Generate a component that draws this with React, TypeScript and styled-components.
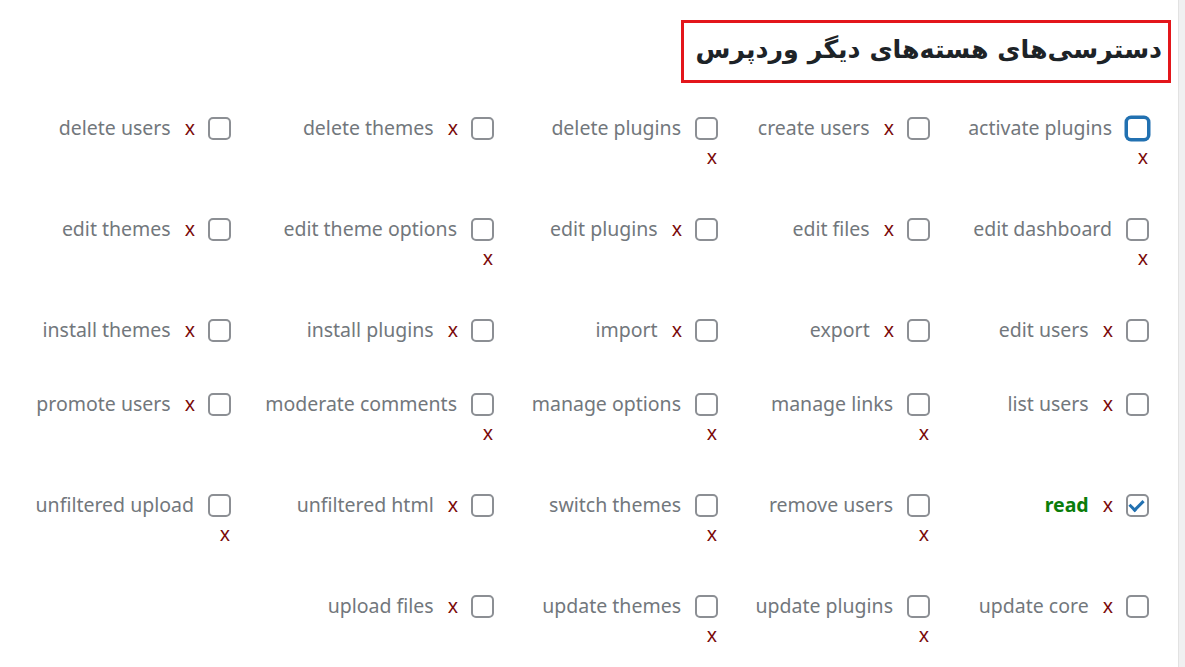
import React from 'react';
import styled, { createGlobalStyle } from 'styled-components';

interface Cap {
  name: string;
  wrap?: boolean;
  checked?: boolean;
  focused?: boolean;
  granted?: boolean;
}

const rows: Cap[][] = [
  [
    { name: 'activate plugins', wrap: true, focused: true },
    { name: 'create users' },
    { name: 'delete plugins', wrap: true },
    { name: 'delete themes' },
    { name: 'delete users' },
  ],
  [
    { name: 'edit dashboard', wrap: true },
    { name: 'edit files' },
    { name: 'edit plugins' },
    { name: 'edit theme options', wrap: true },
    { name: 'edit themes' },
  ],
  [
    { name: 'edit users' },
    { name: 'export' },
    { name: 'import' },
    { name: 'install plugins' },
    { name: 'install themes' },
  ],
  [
    { name: 'list users' },
    { name: 'manage links', wrap: true },
    { name: 'manage options', wrap: true },
    { name: 'moderate comments', wrap: true },
    { name: 'promote users' },
  ],
  [
    { name: 'read', checked: true, granted: true },
    { name: 'remove users', wrap: true },
    { name: 'switch themes', wrap: true },
    { name: 'unfiltered html' },
    { name: 'unfiltered upload', wrap: true },
  ],
  [
    { name: 'update core' },
    { name: 'update plugins', wrap: true },
    { name: 'update themes', wrap: true },
    { name: 'upload files' },
  ],
];

const GlobalStyle = createGlobalStyle`
  html, body {
    margin: 0;
    padding: 0;
    background: #f0f0f1;
  }
  body {
    font-family: 'Noto Sans', 'DejaVu Sans', sans-serif;
  }
`;

const Page = styled.div`
  display: flex;
  direction: ltr;
  height: 667px;
  overflow: hidden;
  background: #f0f0f1;
`;

const Panel = styled.div`
  width: 1179px;
  background: #fff;
  border-right: 1px solid #e2e2e2;
  direction: rtl;
  padding: 20px 29px 0 0;
  box-sizing: border-box;
`;

const HeadingRow = styled.div`
  display: flex;
  margin-right: -22px;
  margin-bottom: 7px;
`;

const Heading = styled.h2`
  margin: 0;
  width: 490px;
  height: 63px;
  box-sizing: border-box;
  border: 3px solid #e3161b;
  padding: 0 6px 4px 0;
  display: flex;
  align-items: center;
  white-space: nowrap;
  overflow: hidden;
  font-family: 'DejaVu Sans', Tahoma, sans-serif;
  font-size: 25.3px;
  font-weight: 700;
  color: #1d2327;
`;

const Grid = styled.div`
  display: grid;
  grid-template-columns: 219px 212px 224px 263px 1fr;
`;

const Cell = styled.div`
  padding: 23.5px 0;
  font-size: 19.5px;
  line-height: 27px;
  color: #72777c;
  white-space: nowrap;
`;

const Box = styled.input<{ $focused?: boolean }>`
  appearance: none;
  -webkit-appearance: none;
  margin: 0;
  width: 23px;
  height: 23px;
  box-sizing: border-box;
  border: 2px solid ${(p) => (p.$focused ? '#2271b1' : '#8c8f94')};
  box-shadow: ${(p) => (p.$focused ? '0 0 0 1.5px #2271b1' : 'none')};
  border-radius: 5px;
  background: #fff;
  vertical-align: -5px;
  position: relative;
  cursor: pointer;

  &:checked::before {
    content: '';
    position: absolute;
    left: 4px;
    top: 1px;
    width: 6px;
    height: 11px;
    border: solid #2271b1;
    border-width: 0 3px 3px 0;
    transform: rotate(45deg);
  }
`;

const Label = styled.span<{ $granted?: boolean }>`
  margin-right: 14px;
  color: ${(p) => (p.$granted ? '#0a7d0a' : '#72777c')};
  font-weight: ${(p) => (p.$granted ? 700 : 400)};
`;

const Remove = styled.span<{ $wrap?: boolean }>`
  display: ${(p) => (p.$wrap ? 'block' : 'inline')};
  margin: ${(p) => (p.$wrap ? '2px 1px -2px 0' : '0 13px 0 0')};
  color: #7a0a0a;
`;

const App = () => {
  return (
    <Page>
      <GlobalStyle />
      <Panel>
        <HeadingRow>
          <Heading>دسترسی‌های هسته‌های دیگر وردپرس</Heading>
        </HeadingRow>
        <Grid>
          {rows.map((row, i) =>
            row.map((cap) => (
              <Cell key={`${i}-${cap.name}`}>
                <Box type="checkbox" readOnly defaultChecked={cap.checked} $focused={cap.focused} />
                <Label $granted={cap.granted}>{cap.name}</Label>
                <Remove $wrap={cap.wrap}>x</Remove>
              </Cell>
            ))
          )}
        </Grid>
      </Panel>
    </Page>
  );
};

export default App;
